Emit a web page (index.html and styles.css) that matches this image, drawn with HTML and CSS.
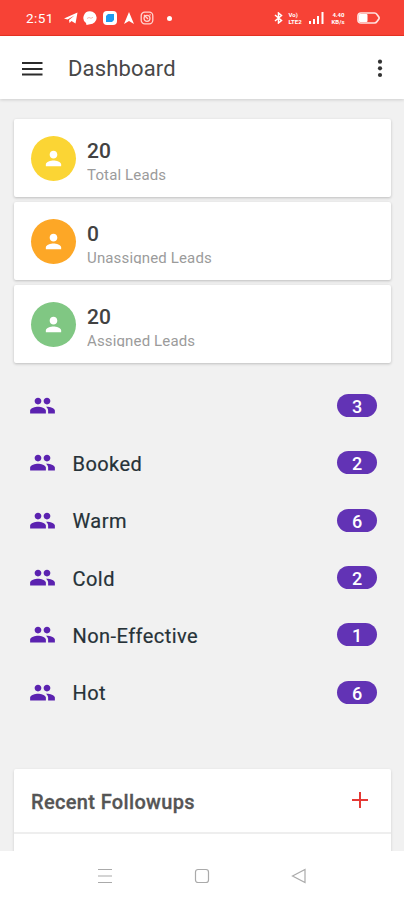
FILE: index.html
```html
<!DOCTYPE html>
<html lang="en">
<head>
    <meta charset="UTF-8">
    <meta name="viewport" content="width=device-width, initial-scale=1.0">
    <title>Dashboard</title>
    <link rel="stylesheet" href="styles.css">
</head>
<body>
    <svg class="sprite">
        <symbol id="person" viewBox="0 0 24 24">
            <path d="M12 12c2.21 0 4-1.79 4-4s-1.79-4-4-4-4 1.79-4 4 1.790 4 4 4zm0 2c-2.670 0-8 1.340-8 4v2h16v-2c0-2.660-5.330-4-8-4z"/>
        </symbol>
        <symbol id="people" viewBox="0 0 24 24">
            <path d="M16 11c1.660 0 2.990-1.340 2.990-3S17.660 5 16 5s-3 1.340-3 3 1.340 3 3 3zm-8 0c1.660 0 2.990-1.340 2.990-3S9.660 5 8 5 5 6.340 5 8s1.340 3 3 3zm0 2c-2.330 0-7 1.170-7 3.500V19h14v-2.500c0-2.330-4.670-3.500-7-3.500zm8 0c-.29 0-.62.020-.97.050 1.160.84 1.970 1.970 1.970 3.450V19h6v-2.500c0-2.330-4.670-3.500-7-3.500z"/>
        </symbol>
    </svg>

    <div class="status-bar">
        <span class="time">2:51</span>
        <div class="notifications">
            <svg width="14" height="14" viewBox="0 0 14 14"><path d="M0 7.500L13.500 1.500 11.500 12.500 7.500 10 5.500 12 5 9 10.500 4.500 3.500 8.500z" fill="#fff"/></svg>
            <svg width="14" height="14" viewBox="0 0 14 14"><path d="M7 0.300a6.600 6.400 0 0 1 0 12.900L3.500 14l-.5-2A6.500 6.500 0 0 1 7 .3z" fill="#fff"/><path d="M4 7.500l2-1 2 .8 2-1" fill="none" stroke="#f9b5ae" stroke-width="1"/></svg>
            <svg width="14" height="14" viewBox="0 0 14 14"><rect width="14" height="14" rx="4" fill="#fff"/><path d="M5 3h6v6l-2 2H3V5z" fill="#1e9bf0"/></svg>
            <svg width="12" height="14" viewBox="0 0 12 14"><path d="M6 1l5 12-5-3-5 3z" fill="#fff"/></svg>
            <svg width="14" height="14" viewBox="0 0 14 14" fill="none" stroke="#ffd4cf" stroke-width="1.300"><rect x="1.200" y="1.200" width="11.600" height="11.600" rx="3.500"/><circle cx="7" cy="7.300" r="3"/><path d="M4 4l4 4M9.500 3.800h1.300"/></svg>
        </div>
        <span class="dot"></span>
        <div class="system">
            <svg width="9" height="12" viewBox="0 0 9 12" fill="none" stroke="#fff" stroke-width="1.500"><path d="M1 3l6.500 5.500L4.500 11V1l3 2.500L1 9"/></svg>
            <span class="tiny">Vo)<br>LTE2</span>
            <svg width="15" height="12" viewBox="0 0 15 12" fill="#fff"><path d="M0 9h2v3H0zM4 7h2v5H4zM8 4h2v8H8zM12.500 0h2v12h-2z"/></svg>
            <span class="tiny rate">4.40<br>KB/s</span>
            <svg class="battery" width="23" height="12" viewBox="0 0 23 12"><path d="M4 1h13.500q1.500 0 2.500 1.500l1.800 2.500q.6 1 0 2L20 9.500q-1 1.500-2.500 1.500H4Q1 11 1 8V4Q1 1 4 1z" fill="none" stroke="#ffe2df" stroke-width="1.700"/><rect x="2" y="2" width="8.500" height="8" rx="1" fill="#fff"/></svg>
        </div>
    </div>

    <header class="toolbar">
        <svg width="21" height="14" viewBox="0 0 21 14" fill="#2b2b2b"><path d="M0 0h20.500v2H0zM0 5.900h20.500v2H0zM0 11.500h20.500v2H0z"/></svg>
        <h1>Dashboard</h1>
        <svg class="more" width="6" height="20" viewBox="0 0 6 20" fill="#333"><circle cx="3" cy="2.700" r="2.100"/><circle cx="3" cy="9.300" r="2.100"/><circle cx="3" cy="16" r="2.100"/></svg>
    </header>

    <main class="content">
        <div class="lead-card">
            <div class="avatar yellow"><svg><use href="#person"/></svg></div>
            <div class="lead-info">
                <strong>20</strong>
                <span class="lead-label">Total Leads</span>
            </div>
        </div>
        <div class="lead-card">
            <div class="avatar orange"><svg><use href="#person"/></svg></div>
            <div class="lead-info">
                <strong>0</strong>
                <span class="lead-label">Unassigned Leads</span>
            </div>
        </div>
        <div class="lead-card">
            <div class="avatar green"><svg><use href="#person"/></svg></div>
            <div class="lead-info">
                <strong>20</strong>
                <span class="lead-label">Assigned Leads</span>
            </div>
        </div>

        <ul class="status-list">
            <li><svg><use href="#people"/></svg><span class="name"></span><span class="badge">3</span></li>
            <li><svg><use href="#people"/></svg><span class="name">Booked</span><span class="badge">2</span></li>
            <li><svg><use href="#people"/></svg><span class="name">Warm</span><span class="badge">6</span></li>
            <li><svg><use href="#people"/></svg><span class="name">Cold</span><span class="badge">2</span></li>
            <li><svg><use href="#people"/></svg><span class="name">Non-Effective</span><span class="badge">1</span></li>
            <li><svg><use href="#people"/></svg><span class="name">Hot</span><span class="badge">6</span></li>
        </ul>

        <section class="followups">
            <div class="followups-header">
                <h2>Recent Followups</h2>
                <svg width="16" height="16" viewBox="0 0 16 16" stroke="#e53935" stroke-width="2"><path d="M0 8h16M8 0v16"/></svg>
            </div>
        </section>
    </main>

    <nav class="nav-bar">
        <svg width="16" height="16" viewBox="0 0 16 16"><path d="M1 1.500h14M1 8h14M1 14.500h14"/></svg>
        <svg width="16" height="16" viewBox="0 0 16 16"><rect x="1.500" y="1.500" width="13" height="13" rx="2.500"/></svg>
        <svg width="16" height="16" viewBox="0 0 16 16"><path d="M1.500 8L14 1.500v13z"/></svg>
    </nav>
</body>
</html>
```
FILE: styles.css
```css
* {
    box-sizing: border-box;
}
body {
    font-family: Roboto, sans-serif;
    margin: 0;
    height: 900px;
    display: flex;
    flex-direction: column;
    overflow: hidden;
    background-color: #f1f1f1;
}
svg {
    display: block;
    flex: none;
}
.sprite {
    display: none;
}
.status-bar {
    display: flex;
    align-items: center;
    height: 36px;
    padding: 1px 24px 0 26px;
    background-color: #f74236;
    border-bottom: 1px solid #ea3323;
    color: #fff;
}
.time {
    width: 37.5px;
    font-size: 13.5px;
    letter-spacing: 0.4px;
}
.notifications {
    display: flex;
    gap: 5.7px;
}
.dot {
    width: 5px;
    height: 5px;
    margin-left: 13px;
    border-radius: 50%;
    background-color: #fff;
}
.system {
    display: flex;
    align-items: center;
    gap: 5.5px;
    margin-left: auto;
}
.tiny {
    width: 15px;
    font-size: 6px;
    font-weight: bold;
    line-height: 7px;
}
.rate {
    text-align: right;
}
.battery {
    margin-left: 7px;
}
.toolbar {
    display: flex;
    align-items: center;
    height: 63px;
    padding: 2px 21px 0 22px;
    background-color: #fff;
    box-shadow: 0 1px 3px rgba(0, 0, 0, 0.15);
}
.toolbar h1 {
    margin: 0 0 0 25px;
    font-size: 22px;
    font-weight: normal;
    letter-spacing: 0.15px;
    color: #484848;
}
.more {
    margin-left: auto;
}
.content {
    flex: 1;
    min-height: 0;
    overflow: hidden;
    padding: 20px 13px 0 14px;
}
.lead-card {
    display: flex;
    align-items: center;
    height: 78px;
    margin-bottom: 5px;
    padding: 0 17px;
    background-color: #fff;
    border-radius: 2px;
    box-shadow: 0 1px 3px rgba(0, 0, 0, 0.22);
}
.avatar {
    display: flex;
    align-items: center;
    justify-content: center;
    width: 45px;
    height: 45px;
    border-radius: 50%;
}
.avatar svg {
    width: 23px;
    height: 23px;
    fill: #fff;
}
.yellow {
    background-color: #fbd534;
}
.orange {
    background-color: #fda726;
}
.green {
    background-color: #80c783;
}
.lead-info {
    display: flex;
    flex-direction: column;
    margin: 3px 0 0 11px;
}
.lead-info strong {
    font-size: 21px;
    font-weight: 500;
    line-height: 26px;
    color: #424242;
}
/* fixed height cuts the descenders */
.lead-label {
    height: 17px;
    overflow: hidden;
    font-size: 15px;
    line-height: 22px;
    letter-spacing: 0.15px;
    color: #9b9b9b;
}
.status-list {
    list-style: none;
    margin: 14px 0 0;
    padding: 0 14px 0 15px;
}
.status-list li {
    display: flex;
    align-items: center;
    height: 57.3px;
}
.status-list svg {
    width: 27px;
    height: 27px;
    fill: #5b22b0;
}
.name {
    flex: 1;
    margin-left: 16.5px;
    padding-top: 2px;
    font-size: 20px;
    letter-spacing: 0.45px;
    color: #263238;
    -webkit-text-stroke: 0.2px #263238;
}
.badge {
    width: 40px;
    height: 23px;
    border-radius: 12px;
    background-color: #6233b5;
    color: #fff;
    font-size: 18px;
    font-weight: 500;
    line-height: 26px;
    text-align: center;
}
.followups {
    height: 200px;
    margin-top: 48px;
    background-color: #fff;
    border-radius: 2px;
    box-shadow: 0 1px 3px rgba(0, 0, 0, 0.15);
}
.followups-header {
    display: flex;
    align-items: center;
    justify-content: space-between;
    height: 65px;
    padding: 0 23px 0 17px;
    border-bottom: 2px solid #eee;
}
.followups-header h2 {
    margin: 3px 0 0;
    font-size: 20px;
    font-weight: 500;
    letter-spacing: 0.35px;
    color: #555;
    -webkit-text-stroke: 0.3px #555;
}
.nav-bar {
    display: flex;
    justify-content: center;
    gap: 81px;
    height: 49px;
    padding-top: 17px;
    background-color: #fff;
}
.nav-bar svg {
    fill: none;
    stroke: #aaa;
    stroke-width: 1.2;
}
```
